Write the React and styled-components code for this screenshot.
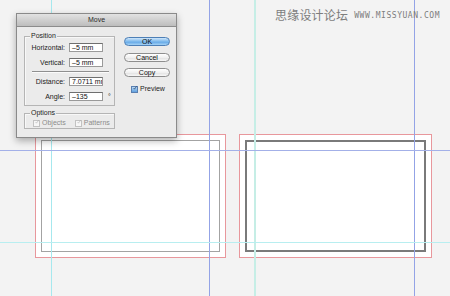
import React from "react";
import styled, { createGlobalStyle } from "styled-components";

const Global = createGlobalStyle`
  html, body { margin: 0; padding: 0; }
  body { background: #f3f3f3; font-family: "Liberation Sans", Arial, sans-serif; }
`;

const Canvas = styled.div`
  position: relative;
  width: 450px;
  height: 296px;
  overflow: hidden;
  background: #f3f3f3;
`;

const ArtboardRow = styled.div`
  display: flex;
  gap: 13px;
  padding: 134px 0 0 35px;
`;

const Bleed = styled.div`
  box-sizing: border-box;
  width: ${(p) => p.$w}px;
  height: 124px;
  border: 1px solid #e8979c;
  background: #ffffff;
  padding: 5px;
  display: flex;
`;

const Trim = styled.div`
  flex: 1;
  border: ${(p) => (p.$dark ? "2px solid #7a7a7a" : "1px solid #a3a3a3")};
`;

const VGuide = styled.div`
  position: absolute;
  top: 0;
  bottom: 0;
  left: ${(p) => p.$x}px;
  width: ${(p) => p.$w || 1}px;
  background: ${(p) => p.$c};
`;

const HGuide = styled.div`
  position: absolute;
  left: 0;
  right: 0;
  top: ${(p) => p.$y}px;
  height: 1px;
  background: ${(p) => p.$c};
`;

const Watermark = styled.div`
  position: absolute;
  left: 275px;
  top: 6px;
  display: flex;
  align-items: center;
  gap: 6px;
  color: #7d7d7d;
`;

const WmCn = styled.span`
  font-family: "Noto Sans CJK SC", sans-serif;
  font-size: 12px;
  letter-spacing: 0.2px;
`;

const WmEn = styled.span`
  font-family: "DejaVu Sans Mono", monospace;
  font-size: 8px;
  letter-spacing: 0.55px;
  margin-top: 2px;
`;

const Dialog = styled.div`
  position: absolute;
  left: 16px;
  top: 13px;
  width: 161px;
  box-sizing: border-box;
  border: 1px solid #8a8a8a;
  background: #ebebeb;
  box-shadow: 0 3px 7px rgba(0, 0, 0, 0.3);
  font-size: 7px;
  color: #222;
`;

const TitleBar = styled.div`
  height: 12px;
  line-height: 12px;
  text-align: center;
  background: linear-gradient(#e2e2e2, #bdbdbd);
  border-bottom: 1px solid #8c8c8c;
  font-size: 7px;
  color: #2a2a2a;
`;

const Body = styled.div`
  display: flex;
  padding: 9px 6px 8px 7px;
`;

const LeftCol = styled.div`
  width: 91px;
  display: flex;
  flex-direction: column;
  gap: 7px;
`;

const Group = styled.div`
  position: relative;
  box-sizing: border-box;
  border: 1px solid #b5b5b5;
  box-shadow: inset 1px 1px 0 #f8f8f8;
  padding: ${(p) => p.$pad};
`;

const Legend = styled.span`
  position: absolute;
  left: 5px;
  top: -5px;
  padding: 0 1px;
  background: #ebebeb;
  line-height: 8px;
  color: #1e1e1e;
`;

const Rows = styled.div`
  display: grid;
  grid-template-columns: 40px 34px 8px;
  column-gap: 4px;
  row-gap: 6px;
  align-items: center;
`;

const Label = styled.span`
  text-align: right;
  line-height: 9px;
  white-space: nowrap;
`;

const Field = styled.div`
  box-sizing: border-box;
  height: 9px;
  background: #fff;
  border: 1px solid #9a9a9a;
  border-top-color: #6f6f6f;
  padding-left: 2px;
  line-height: 7px;
  overflow: hidden;
  white-space: nowrap;
  color: #111;
`;

const Unit = styled.span`
  line-height: 9px;
  padding-left: 1px;
`;

const Separator = styled.div`
  height: 1px;
  border-bottom: 1px solid #fbfbfb;
  background: #8f8f8f;
  margin: 4px 5px 4px 7px;
`;

const CheckRow = styled.div`
  display: flex;
  align-items: center;
  gap: ${(p) => p.$gap}px;
  padding-left: ${(p) => p.$pl}px;
`;

const CheckItem = styled.label`
  display: flex;
  align-items: center;
  gap: 2px;
  line-height: 8px;
  color: ${(p) => (p.$disabled ? "#8c8c8c" : "#1e1e1e")};
`;

const Box = styled.span`
  box-sizing: border-box;
  width: 7px;
  height: 7px;
  display: flex;
  align-items: center;
  justify-content: center;
  border: 1px solid ${(p) => (p.$on ? "#5a7fb0" : "#c2c2c2")};
  background: ${(p) =>
    p.$on ? "linear-gradient(#b8daf7, #5f9fde)" : "#f6f6f6"};
  overflow: visible;
`;

const RightCol = styled.div`
  margin-left: 9px;
  width: 46px;
  padding-top: 1px;
  display: flex;
  flex-direction: column;
  gap: 6.5px;
`;

const Button = styled.div`
  box-sizing: border-box;
  height: 9px;
  border-radius: 5px;
  text-align: center;
  line-height: 7px;
  font-size: 7px;
  border: 1px solid ${(p) => (p.$primary ? "#4d7fb6" : "#8e8e8e")};
  background: ${(p) =>
    p.$primary
      ? "linear-gradient(#cfe6fa, #7cb8ec 50%, #62a6e6 55%, #a5d3f6)"
      : "linear-gradient(#ffffff, #f0f0f0 50%, #e2e2e2 55%, #f7f7f7)"};
  color: #111;
`;

const PreviewRow = styled.div`
  margin-top: 1.5px;
`;

function Check({ on, disabled }) {
  const stroke = on ? "#1b2f55" : "#9a9a9a";
  return (
    <Box $on={on}>
      <svg width="8" height="8" viewBox="0 0 8 8" style={{ marginTop: -2, marginLeft: 1 }}>
        <path d="M1.2 4.2 L3 6.3 L7 0.8" fill="none" stroke={stroke} strokeWidth={disabled ? 0.9 : 1.3} />
      </svg>
    </Box>
  );
}

export default function App() {
  return (
    <>
      <Global />
      <Canvas>
        <ArtboardRow>
          <Bleed $w={191}>
            <Trim />
          </Bleed>
          <Bleed $w={193}>
            <Trim $dark />
          </Bleed>
        </ArtboardRow>

        <VGuide $x={51} $c="#a6e8ee" />
        <VGuide $x={254} $w={2} $c="#c6eee6" />
        <VGuide $x={209} $c="#93a3e6" />
        <VGuide $x={414} $c="#93a3e6" />
        <HGuide $y={150} $c="#a3b0e8" />
        <HGuide $y={242} $c="#b8eef0" />

        <Watermark>
          <WmCn>思缘设计论坛</WmCn>
          <WmEn>WWW.MISSYUAN.COM</WmEn>
        </Watermark>

        <Dialog>
          <TitleBar>Move</TitleBar>
          <Body>
            <LeftCol>
              <Group $pad="6px 0 4px 0">
                <Legend>Position</Legend>
                <Rows>
                  <Label>Horizontal:</Label>
                  <Field>–5 mm</Field>
                  <span />
                  <Label>Vertical:</Label>
                  <Field>–5 mm</Field>
                  <span />
                </Rows>
                <Separator />
                <Rows>
                  <Label>Distance:</Label>
                  <Field>7.0711 mm</Field>
                  <span />
                  <Label>Angle:</Label>
                  <Field>–135</Field>
                  <Unit>°</Unit>
                </Rows>
              </Group>
              <Group $pad="5px 0 1px 0">
                <Legend>Options</Legend>
                <CheckRow $gap={9} $pl={8}>
                  <CheckItem $disabled>
                    <Check disabled />
                    Objects
                  </CheckItem>
                  <CheckItem $disabled>
                    <Check disabled />
                    Patterns
                  </CheckItem>
                </CheckRow>
              </Group>
            </LeftCol>
            <RightCol>
              <Button $primary>OK</Button>
              <Button>Cancel</Button>
              <Button>Copy</Button>
              <PreviewRow>
                <CheckRow $gap={0} $pl={7}>
                  <CheckItem>
                    <Check on />
                    Preview
                  </CheckItem>
                </CheckRow>
              </PreviewRow>
            </RightCol>
          </Body>
        </Dialog>
      </Canvas>
    </>
  );
}
